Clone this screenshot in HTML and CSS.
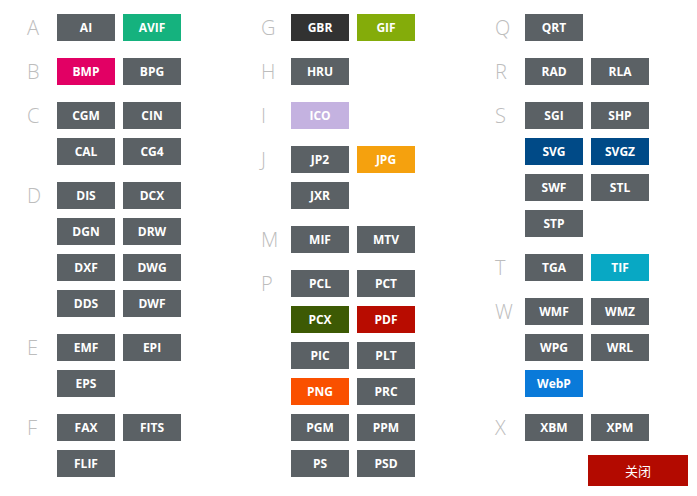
FILE: index.html
```html
<!DOCTYPE html>
<html lang="zh-CN">
<head>
    <meta charset="UTF-8">
    <title>格式列表</title>
    <link rel="stylesheet" href="styles.css">
</head>
<body>
    <div class="formats">
        <div class="format-col">
            <div class="group"><span class="letter">A</span>
                <div class="tiles"><span class="tile">AI</span><span class="tile avif">AVIF</span></div></div>
            <div class="group"><span class="letter">B</span>
                <div class="tiles"><span class="tile bmp">BMP</span><span class="tile">BPG</span></div></div>
            <div class="group"><span class="letter">C</span>
                <div class="tiles"><span class="tile">CGM</span><span class="tile">CIN</span><span class="tile">CAL</span><span class="tile">CG4</span></div></div>
            <div class="group"><span class="letter">D</span>
                <div class="tiles"><span class="tile">DIS</span><span class="tile">DCX</span><span class="tile">DGN</span><span class="tile">DRW</span><span class="tile">DXF</span><span class="tile">DWG</span><span class="tile">DDS</span><span class="tile">DWF</span></div></div>
            <div class="group"><span class="letter">E</span>
                <div class="tiles"><span class="tile">EMF</span><span class="tile">EPI</span><span class="tile">EPS</span></div></div>
            <div class="group"><span class="letter">F</span>
                <div class="tiles"><span class="tile">FAX</span><span class="tile">FITS</span><span class="tile">FLIF</span></div></div>
        </div>

        <div class="format-col">
            <div class="group"><span class="letter">G</span>
                <div class="tiles"><span class="tile gbr">GBR</span><span class="tile gif">GIF</span></div></div>
            <div class="group"><span class="letter">H</span>
                <div class="tiles"><span class="tile">HRU</span></div></div>
            <div class="group"><span class="letter">I</span>
                <div class="tiles"><span class="tile ico">ICO</span></div></div>
            <div class="group"><span class="letter">J</span>
                <div class="tiles"><span class="tile">JP2</span><span class="tile jpg">JPG</span><span class="tile">JXR</span></div></div>
            <div class="group"><span class="letter">M</span>
                <div class="tiles"><span class="tile">MIF</span><span class="tile">MTV</span></div></div>
            <div class="group"><span class="letter">P</span>
                <div class="tiles"><span class="tile">PCL</span><span class="tile">PCT</span><span class="tile pcx">PCX</span><span class="tile pdf">PDF</span><span class="tile">PIC</span><span class="tile">PLT</span><span class="tile png">PNG</span><span class="tile">PRC</span><span class="tile">PGM</span><span class="tile">PPM</span><span class="tile">PS</span><span class="tile">PSD</span></div></div>
        </div>

        <div class="format-col last-col">
            <div class="group"><span class="letter">Q</span>
                <div class="tiles"><span class="tile">QRT</span></div></div>
            <div class="group"><span class="letter">R</span>
                <div class="tiles"><span class="tile">RAD</span><span class="tile">RLA</span></div></div>
            <div class="group"><span class="letter">S</span>
                <div class="tiles"><span class="tile">SGI</span><span class="tile">SHP</span><span class="tile svg">SVG</span><span class="tile svg">SVGZ</span><span class="tile">SWF</span><span class="tile">STL</span><span class="tile">STP</span></div></div>
            <div class="group"><span class="letter">T</span>
                <div class="tiles"><span class="tile">TGA</span><span class="tile tif">TIF</span></div></div>
            <div class="group"><span class="letter">W</span>
                <div class="tiles"><span class="tile">WMF</span><span class="tile">WMZ</span><span class="tile">WPG</span><span class="tile">WRL</span><span class="tile webp">WebP</span></div></div>
            <div class="group"><span class="letter">X</span>
                <div class="tiles"><span class="tile">XBM</span><span class="tile">XPM</span></div></div>
            <div class="dialog-footer">
                <button class="close-button">关闭</button>
            </div>
        </div>
    </div>
</body>
</html>
```

FILE: styles.css
```css
body{
    margin: 0;
    background-color: #ffffff;
    font-family: "Open Sans", "Noto Sans CJK SC", sans-serif;
}

.formats{
    display: flex;
    gap: 80px;
    padding: 14px 9px 0 27px;
}

.format-col{
    width: 154px;
    display: flex;
    flex-direction: column;
}

.last-col{
    flex: 1;
}

.group{
    display: flex;
    margin-bottom: 17px;
}

.letter{
    width: 30px;
    height: 27px;
    line-height: 27px;
    font-size: 20px;
    font-weight: 300;
    color: #bdbdbd;
}

.tiles{
    display: grid;
    grid-template-columns: 58px 58px;
    column-gap: 8px;
    row-gap: 9px;
}

.tile{
    height: 27px;
    line-height: 27px;
    text-align: center;
    font-size: 12px;
    font-weight: 700;
    color: #ffffff;
    background-color: #5b6165;
}

.avif{ background-color: #15b27e; }
.bmp{ background-color: #e20064; }
.gbr{ background-color: #323232; }
.gif{ background-color: #84ac0a; }
.ico{ background-color: #c4b2e0; }
.jpg{ background-color: #f5a10e; }
.pcx{ background-color: #3d5a04; }
.pdf{ background-color: #b80c00; }
.png{ background-color: #fa5000; }
.svg{ background-color: #004a87; }
.tif{ background-color: #08a8c4; }
.webp{ background-color: #0a7ad9; }

.dialog-footer{
    display: flex;
    justify-content: flex-end;
    margin-top: -3px;
}

.close-button{
    width: 100px;
    height: 31px;
    border: none;
    padding: 0;
    font-family: "Noto Sans CJK SC", sans-serif;
    font-size: 13px;
    color: #ffffff;
    background-color: #b30a00;
}
```
